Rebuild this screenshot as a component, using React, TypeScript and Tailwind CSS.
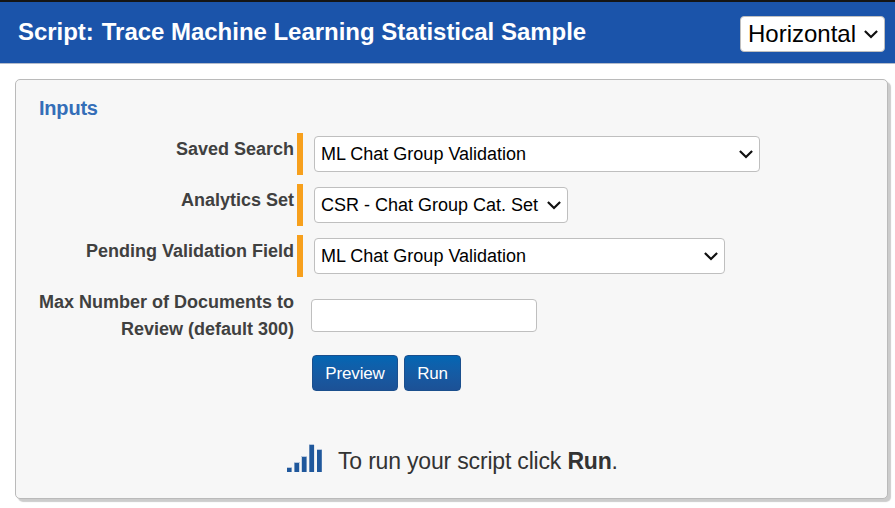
import React from 'react';

function Chevron() {
  return (
    <svg className="block shrink-0" width="14" height="9" viewBox="0 0 14 9" fill="none" stroke="#101010" strokeWidth="2.2">
      <path d="M0.9 1 L7 7 L13.1 1" />
    </svg>
  );
}

function Select({ value, className }: { value: string; className: string }) {
  return (
    <div
      role="combobox"
      aria-expanded="false"
      className={`flex h-9 items-center justify-between rounded border border-[#bfbfbf] bg-white pr-[6px] whitespace-nowrap text-black ${className}`}
    >
      <span>{value}</span>
      <Chevron />
    </div>
  );
}

function Field({ label, value, width }: { label: string; value: string; width: string }) {
  return (
    <div className="flex h-[51px] items-start">
      <div className="w-[278px] pt-[3px] text-right text-[18px] leading-[27px] font-bold text-[#404040]">{label}</div>
      <div className="ml-[3px] h-[42px] w-[6px] bg-[#f7a01d]" />
      <Select value={value} className={`mt-[3px] ml-[11px] pl-[6px] text-[18px] ${width}`} />
    </div>
  );
}

function Button({ label, width }: { label: string; width: string }) {
  return (
    <button
      className={`h-9 rounded border border-[#1b4f8d] bg-linear-to-b from-[#0366b3] to-[#1c5196] pt-[2px] text-[17px] tracking-[-0.15px] text-white ${width}`}
    >
      {label}
    </button>
  );
}

export default function App() {
  return (
    <div className="h-[508px] w-[895px] overflow-hidden bg-white font-['Liberation_Sans',Arial,sans-serif]">
      <header className="flex h-16 items-start justify-between border-t-2 border-b border-t-[#151515] border-b-[#b4bccb] bg-[#1b54aa] pr-[10px] pl-[18px]">
        <h1 className="mt-[12px] flex gap-[8px] text-[24px] leading-9 font-bold tracking-[-0.03px] whitespace-nowrap text-white">
          <span>Script:</span>
          <span>Trace Machine Learning Statistical Sample</span>
        </h1>
        <Select value="Horizontal" className="mt-[14px] w-[145px] pl-[7px] text-[24px]" />
      </header>

      <main className="mt-[15px] ml-[15px] h-[420px] w-[873px] rounded-[5px] border border-[#bababa] bg-[#f7f7f7] shadow-[3px_3px_1px_#cccccc]">
        <h2 className="h-[53px] pt-[13px] pl-[23px] text-[20px] leading-[30px] font-bold tracking-[-0.2px] text-[#346eb8]">Inputs</h2>
        <Field label="Saved Search" value="ML Chat Group Validation" width="w-[446px]" />
        <Field label="Analytics Set" value="CSR - Chat Group Cat. Set" width="w-[254px]" />
        <Field label="Pending Validation Field" value="ML Chat Group Validation" width="w-[411px]" />
        <div className="flex h-[69px] items-start">
          <div className="w-[278px] pt-[3px] text-right text-[18px] leading-[27px] font-bold whitespace-nowrap text-[#404040]">
            Max Number of Documents to
            <br />
            Review (default 300)
          </div>
          <input className="mt-[13px] ml-[17px] h-[33px] w-[226px] rounded border border-[#bfbfbf] bg-white" />
        </div>
        <div className="flex gap-[6px] pl-[296px]">
          <Button label="Preview" width="w-[86px]" />
          <Button label="Run" width="w-[57px]" />
        </div>
        <div className="mt-[50px] flex h-[38px] items-start pl-[271px]">
          <svg className="mt-[3px] block" width="36" height="28" viewBox="0 0 36 28">
            <g fill="#b9c8dd">
              <rect x="0" y="23" width="5" height="1" />
              <rect x="7" y="18" width="6" height="1" />
              <rect x="14" y="12" width="6" height="1" />
              <rect x="22" y="0" width="5" height="1" />
              <rect x="30" y="5" width="5" height="1" />
            </g>
            <g fill="#20589c">
              <rect x="0" y="24" width="4.6" height="4" />
              <rect x="7.4" y="19" width="4.8" height="9" />
              <rect x="14.8" y="13" width="4.8" height="15" />
              <rect x="22.3" y="1" width="4.8" height="27" />
              <rect x="30" y="6" width="4.8" height="22" />
            </g>
          </svg>
          <p className="mt-[2px] ml-[15px] text-[23px] leading-9 tracking-[-0.18px] whitespace-nowrap text-[#333333]">
            To run your script click <strong>Run</strong>.
          </p>
        </div>
      </main>
    </div>
  );
}
